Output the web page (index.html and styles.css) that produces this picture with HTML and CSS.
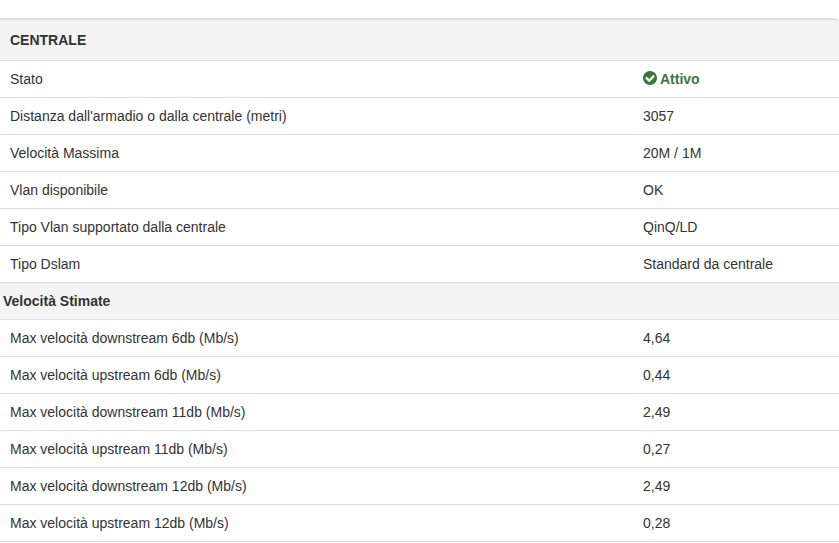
FILE: index.html
```html
<!DOCTYPE html>
<html lang="it">
<head>
<meta charset="utf-8">
<title>Centrale</title>
<link rel="stylesheet" href="styles.css">
</head>
<body>
<div class="panel">
<table class="info">
<colgroup><col class="col-label"><col></colgroup>
<thead>
<tr class="head"><th colspan="2">CENTRALE</th></tr>
</thead>
<tbody>
<tr><td>Stato</td><td><span class="status"><svg class="status-icon" viewBox="128 128 1536 1536" aria-hidden="true"><path d="M1412 734q0-28-18-46l-91-90q-19-19-45-19t-45 19l-408 407-226-226q-19-19-45-19t-45 19l-91 90q-18 18-18 46 0 27 18 45l362 362q19 19 45 19 27 0 46-19l543-543q18-18 18-45zm252 162q0 209-103 385.5t-279.5 279.5-385.5 103-385.5-103-279.5-279.5-103-385.5 103-385.5 279.5-279.5 385.5-103 385.5 103 279.5 279.5 103 385.5z"/></svg>Attivo</span></td></tr>
<tr><td>Distanza dall'armadio o dalla centrale (metri)</td><td>3057</td></tr>
<tr><td>Velocità Massima</td><td>20M / 1M</td></tr>
<tr><td>Vlan disponibile</td><td>OK</td></tr>
<tr><td>Tipo Vlan supportato dalla centrale</td><td>QinQ/LD</td></tr>
<tr><td>Tipo Dslam</td><td>Standard da centrale</td></tr>
<tr class="section"><th colspan="2">Velocità Stimate</th></tr>
<tr><td>Max velocità downstream 6db (Mb/s)</td><td>4,64</td></tr>
<tr><td>Max velocità upstream 6db (Mb/s)</td><td>0,44</td></tr>
<tr><td>Max velocità downstream 11db (Mb/s)</td><td>2,49</td></tr>
<tr><td>Max velocità upstream 11db (Mb/s)</td><td>0,27</td></tr>
<tr><td>Max velocità downstream 12db (Mb/s)</td><td>2,49</td></tr>
<tr><td>Max velocità upstream 12db (Mb/s)</td><td>0,28</td></tr>
</tbody>
</table>
</div>
</body>
</html>
```

FILE: styles.css
```css
html, body {
  margin: 0;
  padding: 0;
  background: #fff;
  overflow: hidden;
}

body {
  font-family: "Liberation Sans", Arial, sans-serif;
  font-size: 14px;
  line-height: 20px;
  color: #333;
  padding-top: 18px;
}

.panel {
  border-top: 2px solid #ddd;
  border-top-right-radius: 5px;
  overflow: hidden;
}

.info {
  width: 100%;
  table-layout: fixed;
  border-collapse: separate;
  border-spacing: 0;
}

.col-label {
  width: 643px;
}

.info td,
.info th {
  padding: 8px 10px;
  border-bottom: 1px solid #ddd;
  text-align: left;
  vertical-align: top;
}

.info td + td {
  padding-left: 0;
}

.head th,
.section th {
  background: #f4f4f4;
  font-weight: 700;
}

.head th {
  padding-top: 10px;
  padding-bottom: 10px;
}

.section th {
  padding-left: 3px;
}

.status {
  color: #3c763d;
  font-weight: 700;
}

.status-icon {
  width: 14px;
  height: 14px;
  margin-right: 3px;
  margin-bottom: -1px;
  vertical-align: baseline;
  fill: currentColor;
}
```
